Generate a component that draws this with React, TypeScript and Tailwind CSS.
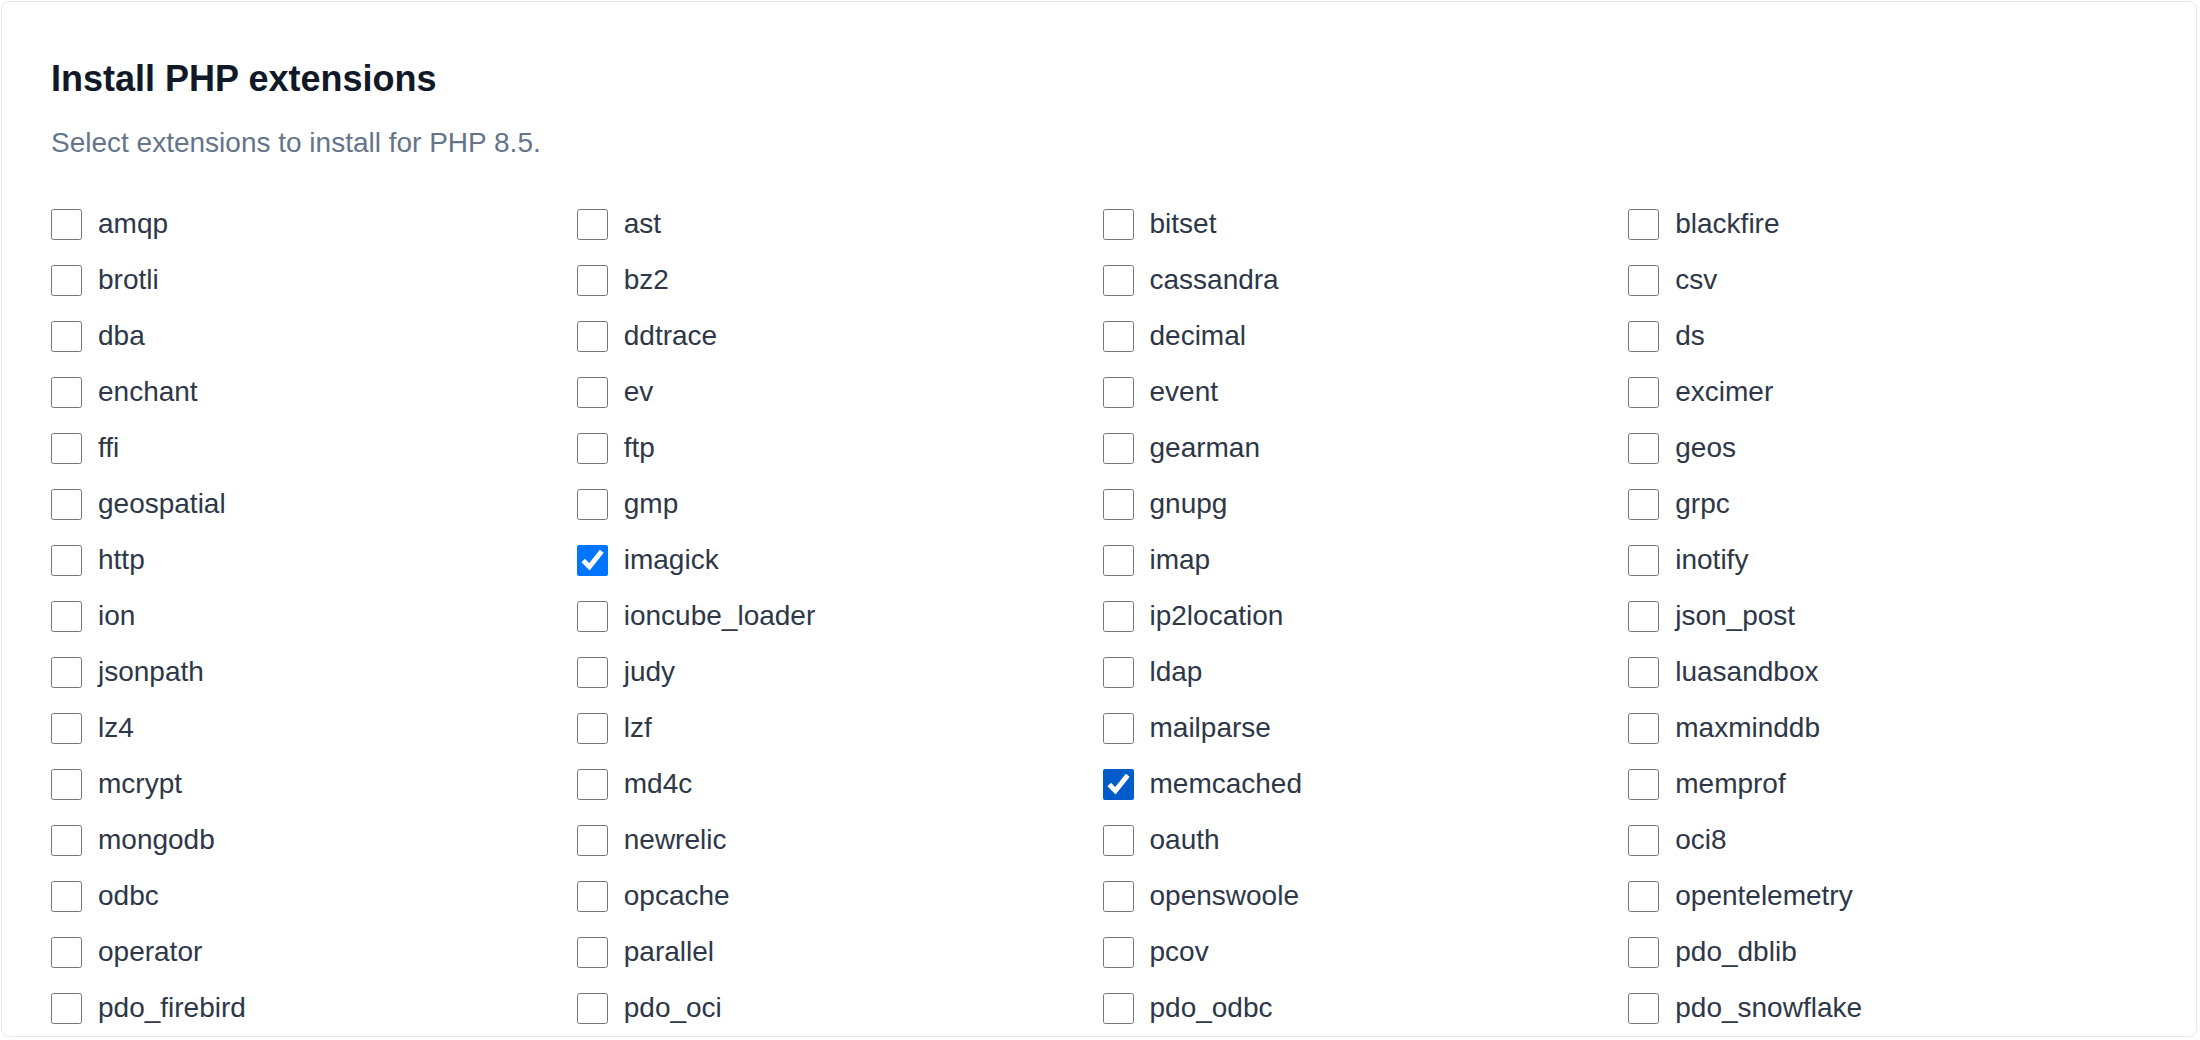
import { useState } from 'react'

const EXTENSIONS = [
  'amqp', 'ast', 'bitset', 'blackfire',
  'brotli', 'bz2', 'cassandra', 'csv',
  'dba', 'ddtrace', 'decimal', 'ds',
  'enchant', 'ev', 'event', 'excimer',
  'ffi', 'ftp', 'gearman', 'geos',
  'geospatial', 'gmp', 'gnupg', 'grpc',
  'http', 'imagick', 'imap', 'inotify',
  'ion', 'ioncube_loader', 'ip2location', 'json_post',
  'jsonpath', 'judy', 'ldap', 'luasandbox',
  'lz4', 'lzf', 'mailparse', 'maxminddb',
  'mcrypt', 'md4c', 'memcached', 'memprof',
  'mongodb', 'newrelic', 'oauth', 'oci8',
  'odbc', 'opcache', 'openswoole', 'opentelemetry',
  'operator', 'parallel', 'pcov', 'pdo_dblib',
  'pdo_firebird', 'pdo_oci', 'pdo_odbc', 'pdo_snowflake',
]

export default function App() {
  const [selected, setSelected] = useState<string[]>(['imagick', 'memcached'])

  function toggle(name: string) {
    setSelected((s) => (s.includes(name) ? s.filter((n) => n !== name) : [...s, name]))
  }

  return (
    <div className="bg-white w-[2200px] h-[1040px] pl-px pt-px" style={{ fontFamily: '"Liberation Sans", Arial, sans-serif' }}>
      <div className="w-[2196px] h-[1036px] bg-white border border-[#e5e7eb] rounded-lg overflow-hidden pl-[49px] pr-[42px] pt-[57px]">
        <h2 className="text-4xl font-bold text-[#111827]">Install PHP extensions</h2>
        <p className="mt-[24px] text-[28px] leading-[40px] text-[#64748b]">Select extensions to install for PHP 8.5.</p>

        <div className="mt-[41px] grid grid-cols-4 gap-y-4">
          {EXTENSIONS.map((name) => (
            <label key={name} className="flex items-center gap-[16px] h-10 cursor-pointer">
              <input
                type="checkbox"
                checked={selected.includes(name)}
                onChange={() => toggle(name)}
                className={
                  name === 'memcached'
                    ? 'w-[31px] h-[31px] shrink-0 accent-[#005cc8]'
                    : 'w-[31px] h-[31px] shrink-0'
                }
              />
              <span className="text-[28px] leading-[40px] text-[#2d3748]">{name}</span>
            </label>
          ))}
        </div>
      </div>
    </div>
  )
}
